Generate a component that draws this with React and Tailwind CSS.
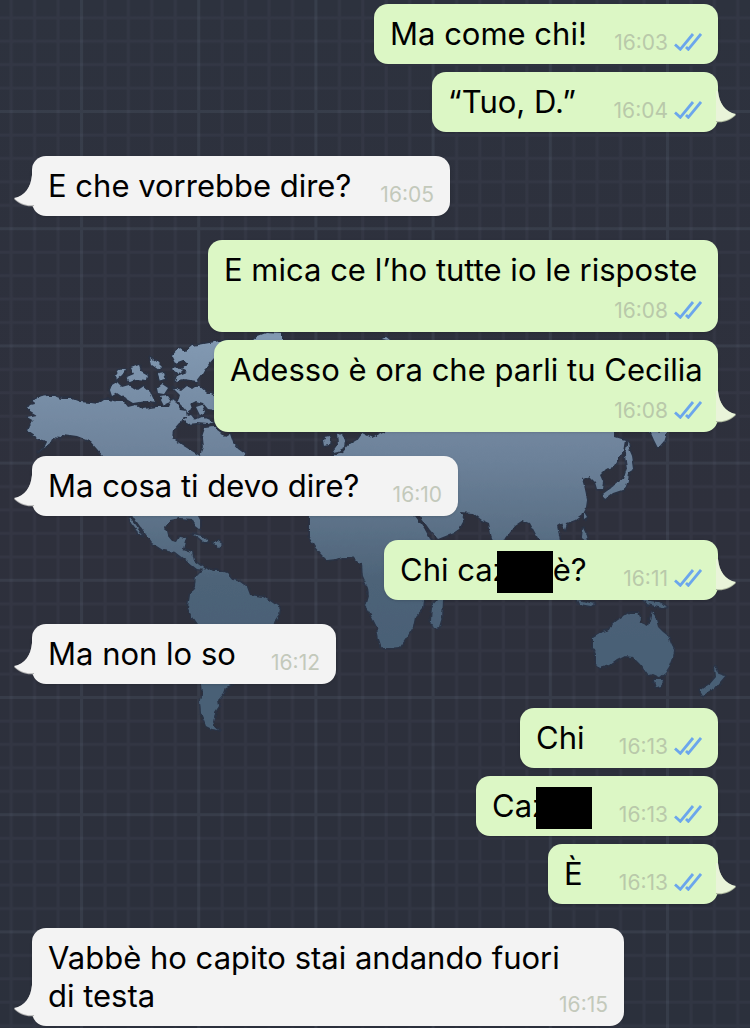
import React from "react";
import clsx from "clsx";

const groups = [
	{
		sent: true,
		messages: [
			{ text: "Ma come chi!", time: "16:03", width: "w-[344px]" },
			{ text: "“Tuo, D.”", time: "16:04", width: "w-[286px]" },
		],
	},
	{
		messages: [
			{ text: "E che vorrebbe dire?", time: "16:05", width: "w-[418px]" },
		],
	},
	{
		sent: true,
		messages: [
			{
				text: "E mica ce l’ho tutte io le risposte",
				time: "16:08",
				stacked: true,
				width: "w-[510px]",
			},
			{
				text: "Adesso è ora che parli tu Cecilia",
				time: "16:08",
				stacked: true,
				width: "w-[504px]",
			},
		],
	},
	{
		messages: [
			{ text: "Ma cosa ti devo dire?", time: "16:10", width: "w-[426px]" },
		],
	},
	{
		sent: true,
		messages: [
			{
				text: "Chi caz",
				redacted: true,
				after: "è?",
				time: "16:11",
				width: "w-[334px]",
			},
		],
	},
	{ messages: [{ text: "Ma non lo so", time: "16:12", width: "w-[304px]" }] },
	{
		sent: true,
		messages: [
			{ text: "Chi", time: "16:13", width: "w-[198px]" },
			{ text: "Caz", redacted: true, time: "16:13", width: "w-[242px]" },
			{ text: "È", time: "16:13", width: "w-[170px]" },
		],
	},
	{
		messages: [
			{
				text: "Vabbè ho capito stai andando fuori di testa",
				time: "16:15",
				long: true,
				width: "w-[592px]",
			},
		],
	},
];

const land = [
	// North and Central America
	"M30 405 27 409 37 415 27 417 34 421 30 425 28 432 37 438 47 441 44 447 38 452 50 443 53 437 60 438 63 434 77 436 90 441 97 449 103 456 112 485 133 516 137 522 145 533 152 543 163 550 175 552 188 562 197 569 206 570 202 567 194 561 192 552 183 549 186 538 180 537 177 542 172 541 167 535 165 527 170 520 180 518 192 519 196 526 200 529 200 520 197 514 215 485 248 470 245 454 238 449 233 443 230 434 225 437 220 432 213 427 205 428 202 437 203 448 200 456 195 453 182 445 172 438 173 430 180 422 187 418 186 411 180 410 173 398 169 407 157 407 143 409 136 405 128 407 124 402 117 402 110 400 103 400 97 404 90 403 80 402 72 399 62 399 54 396 47 396 41 397 33 400 34 404Z",
	"M129 516 136 525 143 536 137 531 131 523Z",
	// South America
	"M203 570 208 568 213 571 221 571 227 573 233 580 240 582 247 587 250 595 263 597 270 601 280 608 279 614 275 620 268 640 255 660 240 675 233 684 226 687 224 693 218 700 219 706 215 712 213 722 215 727 219 730 212 729 206 726 203 718 201 713 200 700 203 693 202 684 206 650 197 624 192 617 188 608 190 595 195 587 196 577Z",
	// Africa
	"M312 500 309 516 309 537 315 547 320 553 327 560 336 559 341 557 353 557 358 562 362 563 363 577 368 588 369 596 366 607 372 617 377 627 379 639 382 648 390 648 400 647 407 637 413 627 415 617 423 608 424 600 445 572 452 545 438 547 430 539 424 528 415 516 402 494 350 484Z",
	"M443 600 442 617 439 627 434 628 431 622 432 607 438 600Z",
	// Europe and Asia
	"M333 455 343 452 350 444 357 440 362 433 372 438 385 432 392 400 470 365 590 372 690 395 680 420 660 425 640 410 615 432 615 437 625 440 623 452 613 467 606 469 600 475 603 482 602 489 597 489 595 482 589 476 582 479 584 486 587 500 586 507 582 515 575 520 567 523 565 529 562 523 557 526 560 540 548 550 538 538 530 523 523 520 514 526 505 538 500 548 492 539 489 523 482 520 473 513 460 512 464 520 459 529 453 533 438 539 430 530 420 516 400 494 350 482 333 470Z",
	"M650 431 667 432 664 441 658 448 654 440Z",
	"M628 440 629 449 632 456 634 469 629 472 628 480 625 489 613 493 605 499 603 494 615 485 624 478 627 468 625 455Z",
	"M584 512 587 517 584 519ZM583 528 587 536 588 542 582 537ZM578 600 594 604 591 606 580 604ZM643 600 657 602 667 607 662 608 648 604Z",
	// Oceania
	"M593 638 603 632 610 630 613 624 618 620 623 617 630 613 638 613 640 617 639 622 648 626 650 620 652 612 655 616 658 627 663 632 668 636 671 644 674 650 673 657 670 665 665 673 660 677 653 674 648 675 643 668 640 664 633 657 625 656 617 660 610 665 600 668 596 664 596 654 593 647Z",
	"M654 680 663 680 661 686 656 687Z",
	"M715 666 719 674 725 676 720 682 715 688 709 691 703 696 700 691 710 684 716 677Z",
	// British Isles and Iceland
	"M327 435 331 438 330 445 324 446 323 440ZM337 432 342 435 346 441 345 447 338 451 333 452 338 445Z",
	// Caribbean
	"M193 534 201 536 208 542 204 542 198 537ZM213 543 218 541 222 544 218 547Z",
	// Arctic islands
	"M172 357 180 348 186 352 193 346 215 342 225 340 240 345 214 358 207 366 203 373 197 381 184 379 175 381 177 376 187 372 181 369 188 364 183 360 175 363Z",
	"M112 385 117 382 122 387 129 385 137 390 143 386 150 392 152 397 155 403 145 401 133 403 123 397 117 393 112 396 110 390Z",
	"M115 376 119 370 126 369 122 375 116 380ZM127 377 134 374 131 368 139 365 141 371 148 375 147 380 137 379 130 382Z",
	"M150 357 157 362 162 367 159 370 152 365ZM158 374 164 373 166 379 160 380ZM157 388 162 384 168 388 164 394 158 393ZM172 370 176 366 182 371 177 374Z",
	"M173 388 181 391 187 386 192 389 198 385 207 393 211 393 218 397 216 410 208 409 203 403 196 401 190 404 192 410 188 413 182 406 178 402 180 395Z",
	"M183 417 191 415 195 420 202 417 214 422 208 424 197 423 188 424Z",
	"M160 397 167 396 171 402 164 405ZM196 407 202 405 205 412 200 415Z",
	"M252 341 258 336 266 333 282 334 282 345 254 346ZM382 339 386 337 390 340Z",
];

function Wallpaper() {
	return (
		<svg
			className="absolute inset-0 h-full w-full"
			viewBox="0 0 750 1028"
			preserveAspectRatio="xMidYMid slice"
			aria-hidden="true"
		>
			<defs>
				<pattern
					id="grid"
					x="80"
					y="110"
					width="117.2"
					height="117.2"
					patternUnits="userSpaceOnUse"
				>
					<path
						d="M25 0V118M48.4 0V118M71.8 0V118M95.3 0V118M0 25H118M0 48.4H118M0 71.8H118M0 95.3H118"
						stroke="#9aa8c0"
						strokeOpacity="0.05"
						strokeWidth="3"
					/>
					<path
						d="M1.5 0V118M0 1.5H118"
						stroke="#9aa8c0"
						strokeOpacity="0.1"
						strokeWidth="3"
					/>
				</pattern>
				<linearGradient
					id="land"
					x1="0"
					y1="340"
					x2="0"
					y2="640"
					gradientUnits="userSpaceOnUse"
				>
					<stop offset="0" stopColor="#8299b2" />
					<stop offset="0.4" stopColor="#6c8199" />
					<stop offset="0.8" stopColor="#4d6378" />
					<stop offset="1" stopColor="#4a6076" />
				</linearGradient>
				<linearGradient id="night" x1="0" y1="0" x2="0" y2="1">
					<stop offset="0" stopColor="#2d323e" />
					<stop offset="0.5" stopColor="#2e303c" />
					<stop offset="1" stopColor="#2b303c" />
				</linearGradient>
				{/* roughens the coast lines */}
				<filter id="coast">
					<feTurbulence
						type="fractalNoise"
						baseFrequency="0.16"
						numOctaves="2"
						seed="4"
						result="noise"
					/>
					<feDisplacementMap
						in="SourceGraphic"
						in2="noise"
						scale="4"
						xChannelSelector="R"
						yChannelSelector="G"
					/>
					<feGaussianBlur stdDeviation="0.6" />
				</filter>
			</defs>
			<rect width="750" height="1028" fill="url(#night)" />
			<rect width="750" height="1028" fill="url(#grid)" />
			<path
				d={land.join("")}
				fill="url(#land)"
				stroke="#263349"
				strokeOpacity="0.6"
				strokeWidth="3"
				strokeLinejoin="round"
				paintOrder="stroke"
				filter="url(#coast)"
			/>
		</svg>
	);
}

function Ticks() {
	return (
		<svg
			className="mb-1 h-[18px] w-7"
			viewBox="0 0 28 18"
			fill="none"
			stroke="#6ba6ec"
			strokeWidth="2.8"
			role="img"
			aria-label="Letto"
		>
			<path d="M1 11.5 6.3 16.3 19 1" />
			<path d="M12 14 14.3 16.3 27 1" />
		</svg>
	);
}

function Tail({ sent }) {
	return (
		<svg
			className={clsx(
				"absolute bottom-2 h-9 w-5",
				sent ? "-right-[18px]" : "-left-[18px] -scale-x-100"
			)}
			viewBox="0 0 20 36"
			aria-hidden="true"
		>
			<path
				d="M0 3H2C3 15 9 24 20 27 14 33 7 35 0 34Z"
				fill={sent ? "#a9b39b" : "#adadad"}
			/>
			<path
				d="M0 3H2C3 15 9 24 20 26 14 32 7 34 0 33Z"
				fill={sent ? "#e9f4d9" : "#f3f3f3"}
			/>
		</svg>
	);
}

function Bubble({ message, sent, last }) {
	const { text, after, time, redacted, stacked, long, width } = message;

	return (
		<li
			className={clsx(
				"relative flex max-w-full justify-between rounded-[14px] px-4 pt-[11px] pb-[9px] shadow-sm",
				sent ? "bg-[#dcf7c5]" : "bg-[#f3f3f3]",
				stacked ? "flex-col gap-[10px]" : "items-end",
				width
			)}
		>
			<p
				className={clsx(
					"text-[31px] leading-[38px] text-black",
					!stacked && "pb-0.5",
					redacted && "flex items-start",
					long ? "-mr-4 max-w-[516px]" : "whitespace-nowrap"
				)}
			>
				{text}
				{redacted && (
					<span className="relative -mb-2 -ml-[13px] h-[42px] w-14 bg-black"></span>
				)}
				{after && <span>{after}</span>}
			</p>

			<div className="flex shrink-0 items-end justify-end gap-[6px]">
				<time
					className={clsx(
						"text-[21px] leading-6",
						sent ? "text-[#b9c9aa]" : "text-[#c3c9bb]"
					)}
				>
					{time}
				</time>
				{sent && <Ticks />}
			</div>

			{last && <Tail sent={sent} />}
		</li>
	);
}

export default function App() {
	return (
		<div className="relative min-h-screen overflow-hidden bg-[#2d323e] font-[Inter,'Liberation_Sans',sans-serif]">
			<Wallpaper />
			<main className="relative flex flex-col gap-6 px-8 pt-1">
				{groups.map((group, index) => (
					<ul
						key={index}
						className={clsx(
							"flex flex-col gap-2",
							group.sent ? "items-end" : "items-start"
						)}
					>
						{group.messages.map((message, i) => (
							<Bubble
								key={i}
								message={message}
								sent={group.sent}
								last={i === group.messages.length - 1}
							/>
						))}
					</ul>
				))}
			</main>
		</div>
	);
}
